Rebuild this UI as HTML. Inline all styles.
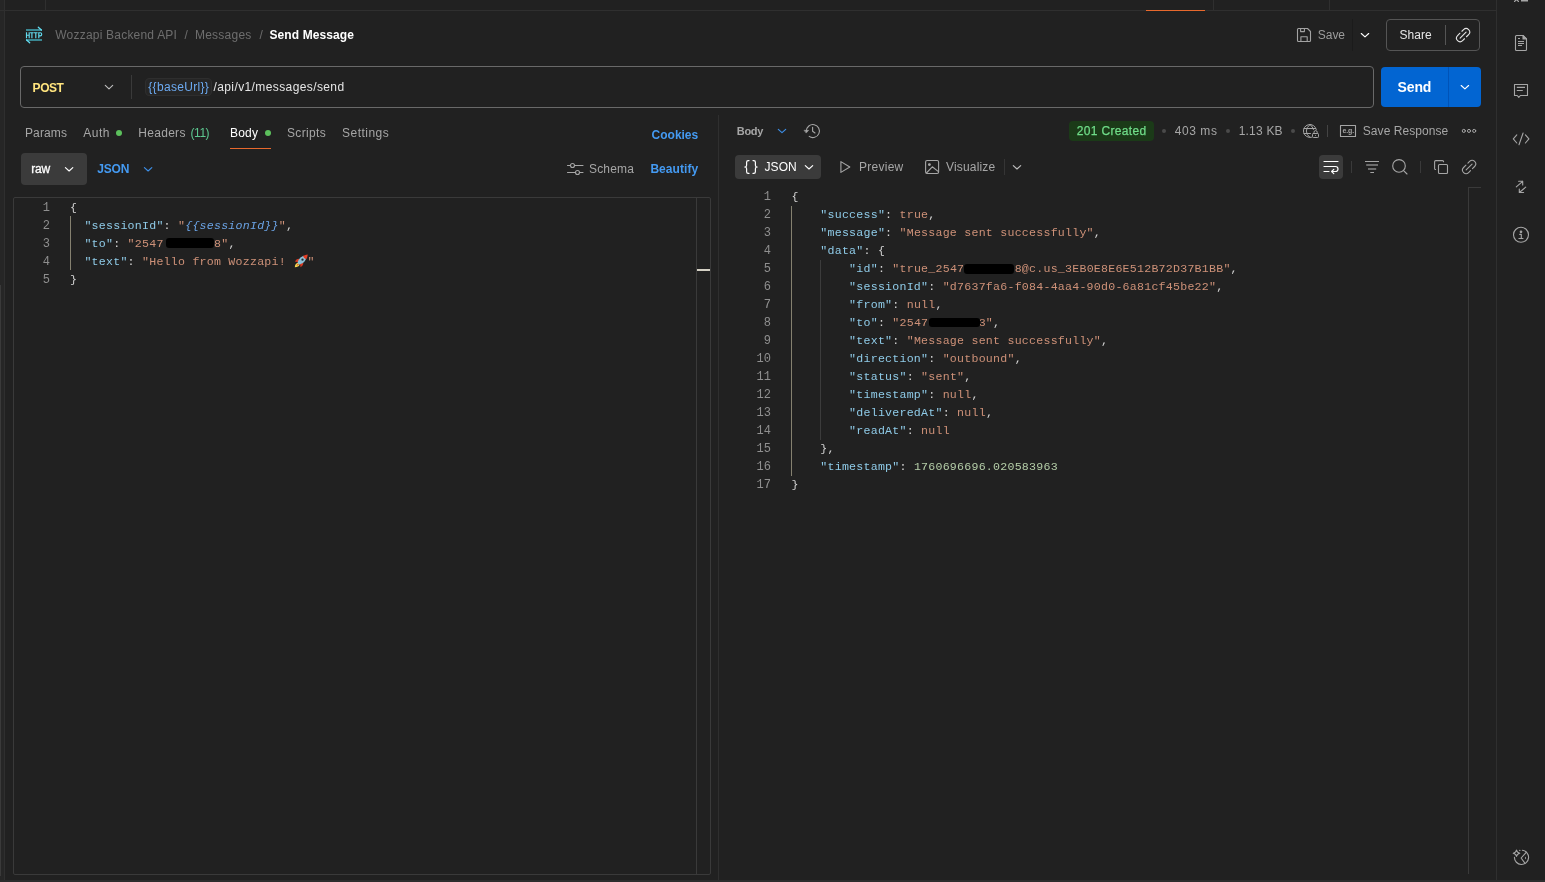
<!DOCTYPE html>
<html>
<head>
<meta charset="utf-8">
<title>Postman</title>
<style>
*{box-sizing:border-box;margin:0;padding:0}
html,body{width:1545px;height:882px;overflow:hidden;background:#212121}
body{position:relative;font-family:"Liberation Sans",sans-serif;font-size:12px;color:#a6a6a6}
.a{position:absolute}
.t{position:absolute;white-space:nowrap;line-height:16px;height:16px}
.ln{position:absolute;background:#2f2f2f}
.code{position:absolute;font-family:"Liberation Mono",monospace;font-size:11.6px;letter-spacing:0.24px;line-height:18px;white-space:pre;color:#d4d4d4}
.k{color:#8fcbe8}.s{color:#ce9178}.p{color:#d4d4d4}.n{color:#b5cea8}.v{color:#6ba4e6;font-style:italic}
.num{position:absolute;text-align:right;color:#8f8f8f;font-family:"Liberation Mono",monospace;font-size:12px;line-height:18px;white-space:pre}
svg{position:absolute;overflow:visible}
.blue{color:#449af2}
.b{font-weight:bold}
.w{color:#fff}
.i{fill:none;stroke:#a6a6a6;stroke-width:1.1;stroke-linecap:round;stroke-linejoin:round}
</style>
</head>
<body>
<div id="root" style="position:absolute;left:0;top:0;width:1545px;height:882px;will-change:transform;transform:translateZ(0)">

<!-- frame lines -->
<div class="a" style="left:0;top:0;width:4px;height:880px;background:#262626"></div>
<div class="a" style="left:0;top:285px;width:1px;height:591px;background:#3a3a3a"></div>
<div class="ln" style="left:4px;top:0;width:1px;height:880px"></div>
<div class="ln" style="left:0;top:10px;width:1497px;height:1px"></div>
<div class="ln" style="left:45px;top:0;width:1px;height:10px"></div>
<div class="ln" style="left:1213px;top:0;width:1px;height:10px"></div>
<div class="ln" style="left:1329px;top:0;width:1px;height:10px"></div>
<div class="a" style="left:1146px;top:10px;width:59px;height:1px;background:#e8692d"></div>
<div class="ln" style="left:1496px;top:0;width:1px;height:880px"></div>
<div class="ln" style="left:718px;top:115px;width:1px;height:765px"></div>
<div class="a" style="left:0;top:880px;width:1545px;height:2px;background:#2d2d2d"></div>

<!-- breadcrumb -->
<div id="bc1" style="left:55.3px;letter-spacing:0.208px;top:27px;color:#6e6e6e" class="t">Wozzapi Backend API</div>
<div class="t" style="left:184.6px;top:27px;color:#6e6e6e">/</div>
<div id="bc2" style="left:194.9px;letter-spacing:0.253px;top:27px;color:#6e6e6e" class="t">Messages</div>
<div class="t" style="left:259.5px;top:27px;color:#6e6e6e">/</div>
<div id="bc3" style="left:269.5px;letter-spacing:0.098px;top:27px;color:#fff" class="t b">Send Message</div>

<!-- save / share -->
<div id="save" style="left:1317.8px;letter-spacing:-0.046px;top:27px;color:#9c9c9c" class="t">Save</div>
<div class="a" style="left:1352px;top:19px;width:1px;height:32px;background:#1b1b1b"></div>
<div class="a" style="left:1386px;top:19px;width:94px;height:32px;border:1px solid #555;border-radius:4px"></div>
<div id="share" style="left:1399.6px;letter-spacing:-0.007px;top:27px;color:#e6e6e6" class="t">Share</div>
<div class="a" style="left:1445px;top:25px;width:1px;height:20px;background:#555"></div>

<!-- url bar -->
<div class="a" style="left:20px;top:66px;width:1354px;height:42px;border:1px solid #696969;border-radius:4px"></div>
<div id="post" style="left:32.6px;letter-spacing:-0.449px;top:80px;color:#ffe47e" class="t b">POST</div>
<div class="a" style="left:131px;top:75px;width:1px;height:24px;background:#3a3a3a"></div>
<div class="a" style="left:145px;top:78px;width:67px;height:18px;border:1px solid #2e2e2e;border-radius:4px;background:#262626"></div>
<div id="burl" style="left:148.3px;letter-spacing:0.306px;top:79px;color:#6caaf2" class="t">{{baseUrl}}</div>
<div id="path" style="left:213.5px;letter-spacing:0.393px;top:79px;color:#e6e6e6" class="t">/api/v1/messages/send</div>

<!-- send -->
<div class="a" style="left:1381px;top:67px;width:100px;height:40px;background:#0265d2;border-radius:4px"></div>
<div class="a" style="left:1448px;top:67px;width:1px;height:40px;background:#0053b8"></div>
<div id="send" style="left:1397.6px;letter-spacing:-0.153px;top:78px;color:#fff;font-size:14px;line-height:18px;height:18px" class="t b">Send</div>

<!-- request tabs -->
<div id="tparams" style="left:25.0px;letter-spacing:0.119px;top:125px" class="t">Params</div>
<div id="tauth" style="left:83.3px;letter-spacing:0.489px;top:125px" class="t">Auth</div>
<div class="a" style="left:116px;top:130px;width:6px;height:6px;border-radius:3px;background:#5cc05c"></div>
<div id="thead" style="left:138.2px;letter-spacing:0.314px;top:125px" class="t">Headers</div>
<div id="t11" style="left:190.5px;letter-spacing:-0.444px;top:125px;color:#5dc890" class="t">(11)</div>
<div id="tbody" style="left:230.0px;letter-spacing:0.183px;top:125px;color:#fff" class="t">Body</div>
<div class="a" style="left:265px;top:130px;width:6px;height:6px;border-radius:3px;background:#5cc05c"></div>
<div class="a" style="left:230px;top:148px;width:41px;height:1px;background:#e8692d"></div>
<div id="tscripts" style="left:287.0px;letter-spacing:0.356px;top:125px" class="t">Scripts</div>
<div id="tsettings" style="left:342.0px;letter-spacing:0.485px;top:125px" class="t">Settings</div>
<div id="cookies" style="left:651.6px;letter-spacing:-0.013px;top:127px" class="t b blue">Cookies</div>

<!-- body type row -->
<div class="a" style="left:21px;top:153px;width:66px;height:32px;background:#3b3b3b;border-radius:4px"></div>
<div id="raw" style="left:31.2px;letter-spacing:-0.177px;top:161px;color:#fff;-webkit-text-stroke:0.3px #fff" class="t">raw</div>
<div id="json1" style="left:97.3px;letter-spacing:-0.225px;top:161px" class="t b blue">JSON</div>
<div id="schema" style="left:589.0px;letter-spacing:0.158px;top:161px" class="t">Schema</div>
<div id="beautify" style="left:650.4px;letter-spacing:0.061px;top:161px" class="t b blue">Beautify</div>

<!-- request editor -->
<div class="a" style="left:13px;top:197px;width:698px;height:678px;border:1px solid #3a3a3a;border-radius:2px"></div>
<div class="a" style="left:696px;top:198px;width:1px;height:676px;background:#3a3a3a"></div>
<div class="a" style="left:697px;top:269px;width:13px;height:2px;background:#d4d0c4"></div>
<div class="num" style="left:20px;top:199px;width:30px">1
2
3
4
5</div>
<div class="a" style="left:70px;top:216px;width:1px;height:54px;background:#858170"></div>
<div class="code" style="left:70px;top:199px"><span class="p">{</span>
  <span class="k">"sessionId"</span>: <span class="s">"</span><span class="v">{{sessionId}}</span><span class="s">"</span>,
  <span class="k">"to"</span>: <span class="s">"2547       8"</span>,
  <span class="k">"text"</span>: <span class="s">"Hello from Wozzapi!   "</span>
<span class="p">}</span></div>
<div class="a" style="left:166px;top:238px;width:48px;height:10px;background:#000;border-radius:3px"></div>

<!-- response header -->
<div id="rbody" style="left:736.8px;letter-spacing:-0.314px;top:123px;font-size:11px" class="t b">Body</div>
<div class="a" style="left:1069px;top:121px;width:85px;height:20px;background:#1b3a18;border-radius:4px"></div>
<div id="created" style="left:1076.7px;letter-spacing:0.338px;top:123px;color:#6fdc88;-webkit-text-stroke:0.25px #6fdc88" class="t">201 Created</div>
<div class="a" style="left:1162px;top:129px;width:4px;height:4px;border-radius:2px;background:#4a4a4a"></div>
<div id="ms" style="left:1174.7px;letter-spacing:0.571px;top:123px" class="t">403 ms</div>
<div class="a" style="left:1226px;top:129px;width:4px;height:4px;border-radius:2px;background:#4a4a4a"></div>
<div id="kb" style="left:1238.7px;letter-spacing:0.200px;top:123px" class="t">1.13 KB</div>
<div class="a" style="left:1291px;top:129px;width:4px;height:4px;border-radius:2px;background:#4a4a4a"></div>
<div class="a" style="left:1327px;top:125px;width:1px;height:12px;background:#444"></div>
<div id="saveresp" style="left:1362.8px;letter-spacing:0.053px;top:123px" class="t">Save Response</div>

<!-- response toolbar -->
<div class="a" style="left:735px;top:155px;width:86px;height:24px;background:#3b3b3b;border-radius:4px"></div>
<div id="json2" style="left:764.6px;letter-spacing:0.024px;top:159px;color:#fff" class="t">JSON</div>
<div id="preview" style="left:859.0px;letter-spacing:0.263px;top:159px" class="t">Preview</div>
<div id="visualize" style="left:946.0px;letter-spacing:0.175px;top:159px" class="t">Visualize</div>
<div class="a" style="left:1004px;top:159px;width:1px;height:16px;background:#353535"></div>
<div class="a" style="left:1319px;top:155px;width:24px;height:24px;background:#3b3b3b;border-radius:4px"></div>
<div class="a" style="left:1351px;top:161px;width:1px;height:12px;background:#3a3a3a"></div>
<div class="a" style="left:1420px;top:161px;width:1px;height:12px;background:#3a3a3a"></div>

<!-- response editor -->
<div class="a" style="left:1468px;top:187px;width:13px;height:1px;background:#3a3a3a"></div>
<div class="a" style="left:1468px;top:187px;width:1px;height:687px;background:#3a3a3a"></div>
<div class="num" style="left:740px;top:188px;width:31px">1
2
3
4
5
6
7
8
9
10
11
12
13
14
15
16
17</div>
<div class="a" style="left:791px;top:206px;width:1px;height:270px;background:#858170"></div>
<div class="a" style="left:820px;top:260px;width:1px;height:180px;background:#3c3c3c"></div>
<div class="code" style="left:791.5px;top:188px"><span class="p">{</span>
    <span class="k">"success"</span>: <span class="s">true</span>,
    <span class="k">"message"</span>: <span class="s">"Message sent successfully"</span>,
    <span class="k">"data"</span>: {
        <span class="k">"id"</span>: <span class="s">"true_2547       8@c.us_3EB0E8E6E512B72D37B1BB"</span>,
        <span class="k">"sessionId"</span>: <span class="s">"d7637fa6-f084-4aa4-90d0-6a81cf45be22"</span>,
        <span class="k">"from"</span>: <span class="s">null</span>,
        <span class="k">"to"</span>: <span class="s">"2547       3"</span>,
        <span class="k">"text"</span>: <span class="s">"Message sent successfully"</span>,
        <span class="k">"direction"</span>: <span class="s">"outbound"</span>,
        <span class="k">"status"</span>: <span class="s">"sent"</span>,
        <span class="k">"timestamp"</span>: <span class="s">null</span>,
        <span class="k">"deliveredAt"</span>: <span class="s">null</span>,
        <span class="k">"readAt"</span>: <span class="s">null</span>
    },
    <span class="k">"timestamp"</span>: <span class="n">1760696696.020583963</span>
<span class="p">}</span></div>
<div class="a" style="left:964px;top:264px;width:50px;height:9.5px;background:#000;border-radius:3px"></div>
<div class="a" style="left:929px;top:318px;width:51px;height:9px;background:#000;border-radius:3px"></div>

<!-- icons overlay -->
<svg style="left:0;top:0" width="1545" height="882" viewBox="0 0 1545 882">
<defs>
<path id="chev" d="M-3.7 -1.7 L0 1.7 L3.7 -1.7" fill="none" stroke-width="1.15" stroke-linecap="round" stroke-linejoin="round"/>
<g id="link" fill="none" stroke-width="1.1" stroke-linecap="round">
<g transform="rotate(-45)"><path d="M1.9 -3.55 H4.25 A3.55 3.55 0 0 1 4.25 3.55 H1.2 M-1.6 3.55 H-4.25 A3.55 3.55 0 0 1 -4.25 -3.55 H-0.9 M-4.2 0 H4.2"/></g></g>
</defs>
<!-- request-type icon -->
<g>
<rect x="26" y="29" width="16" height="2" fill="#3a8792"/>
<rect x="26" y="39" width="16" height="2" fill="#3a8792"/>
<path d="M38.3 27.3 L41.4 30.1" stroke="#62dcf0" stroke-width="1.3" fill="none" stroke-linecap="round"/>
<path d="M26.6 39.9 L29.7 42.7" stroke="#62dcf0" stroke-width="1.3" fill="none" stroke-linecap="round"/>
<path d="M26.5 32.2 V38.3 M29.2 32.2 V38.3 M26.5 35.2 H29.2 M30.1 32.7 H33.7 M31.9 32.7 V38.3 M34 32.7 H37.6 M35.8 32.7 V38.3 M38.8 38.3 V32.7 H40.3 Q41.7 32.7 41.7 34.3 Q41.7 35.9 40.3 35.9 H38.8" stroke="#62dcf0" stroke-width="1.15" fill="none"/>
</g>
<!-- save icon -->
<g class="i" style="stroke:#a3a3a3">
<path d="M1297.5 29.5 Q1297.5 28.5 1298.5 28.5 H1307.5 L1310.5 31.5 V40.5 Q1310.5 41.5 1309.5 41.5 H1298.5 Q1297.5 41.5 1297.5 40.5 Z"/>
<path d="M1300.6 28.5 V31.6 H1304.4 V28.5"/>
<path d="M1300.9 41.5 V36.7 H1307.2 V41.5"/>
</g>
<use href="#chev" x="1365" y="35.2" stroke="#fff"/>
<use href="#link" x="1463.1" y="35.1" stroke="#e6e6e6"/>
<use href="#chev" x="109" y="87.1" stroke="#bdbdbd"/>
<use href="#chev" x="1464.9" y="87.2" stroke="#fff"/>
<use href="#chev" x="69.1" y="169.3" stroke="#fff"/>
<use href="#chev" x="148.1" y="169.3" stroke="#3d8fe8"/>
<!-- schema sliders -->
<g class="i">
<path d="M567.5 165.5 H570.3 M574.7 165.5 H583 M567.5 172.5 H575.3 M579.7 172.5 H583"/>
<circle cx="572.5" cy="165.5" r="2"/><circle cx="577.5" cy="172.5" r="2"/>
</g>
<!-- response header -->
<use href="#chev" x="782" y="131" stroke="#3d8fe8"/>
<g class="i">
<path d="M806.4 131 A6.5 6.5 0 1 1 809.2 136.4"/>
<path d="M804.4 130.3 L808.6 130.3 L806.4 132.8 Z" fill="#a6a6a6" stroke-width=".6"/>
<path d="M812.6 127.3 V131.2 L815 133"/>
</g>
<!-- globe + lock -->
<g class="i" style="stroke-width:1">
<path d="M1311.5 137.3 A6.5 6.5 0 1 1 1316.3 129.5"/>
<path d="M1310 124.5 Q1306.3 127.5 1306.3 131 Q1306.3 134.5 1310 137.5 M1310 124.5 Q1313 127 1313.5 129.5"/>
<path d="M1304 128.5 H1315.5 M1304 133.5 H1310.5"/>
<rect x="1312.5" y="133.5" width="6" height="4" rx=".8"/>
<path d="M1314 133.5 V132.2 A1.6 1.6 0 0 1 1317.2 132.2 V133.5"/><circle cx="1315.5" cy="135.6" r=".5" fill="#a6a6a6" stroke="none"/>
</g>
<!-- e.g. icon -->
<rect x="1340.5" y="125.5" width="15" height="11" class="i"/>
<text x="1342.4" y="133" font-family="Liberation Sans, sans-serif" font-size="7" font-weight="bold" fill="#a6a6a6" letter-spacing="-0.1">e.g.</text>
<!-- ooo -->
<g class="i" style="stroke-width:1"><circle cx="1463.8" cy="130.9" r="1.55"/><circle cx="1469" cy="130.9" r="1.55"/><circle cx="1474.2" cy="130.9" r="1.55"/></g>
<!-- json braces -->
<g class="i" style="stroke:#fff;stroke-width:1.2">
<path d="M749 160.6 H748.2 Q746.6 160.6 746.6 162.2 V165.2 Q746.6 167 744.8 167 Q746.6 167 746.6 168.8 V171.8 Q746.6 173.4 748.2 173.4 H749"/>
<path d="M753 160.6 H753.8 Q755.4 160.6 755.4 162.2 V165.2 Q755.4 167 757.2 167 Q755.4 167 755.4 168.8 V171.8 Q755.4 173.4 753.8 173.4 H753"/>
</g>
<use href="#chev" x="809" y="167.3" stroke="#fff"/>
<!-- preview play -->
<path class="i" d="M840.9 161.6 L849.8 167 L840.9 172.4 Z"/>
<!-- visualize image -->
<g class="i"><rect x="925.6" y="160.5" width="13" height="13" rx="1.5"/><circle cx="929.4" cy="164.6" r=".9" fill="#a6a6a6"/><path d="M926.4 173 L932.3 166.8 L938.4 171.6"/></g>
<use href="#chev" x="1017" y="167.3" stroke="#bdbdbd"/>
<!-- wrap -->
<g class="i" style="stroke:#fff;stroke-width:1.2"><path d="M1324 161.5 H1338 M1324 166.5 H1335.5 A2.5 2.5 0 0 1 1335.5 171.5 H1331.6 M1333.8 169.3 L1331.6 171.5 L1333.8 173.7 M1324 171.5 H1329"/></g>
<!-- filter -->
<g fill="none" stroke-linecap="butt"><path d="M1365 161.5 H1379" stroke="#a6a6a6" stroke-width="1"/><path d="M1366.2 165 H1378" stroke="#808080" stroke-width="1.6"/><path d="M1368 169 H1376.2" stroke="#808080" stroke-width="1.6"/><path d="M1370.3 172.5 H1374" stroke="#a6a6a6" stroke-width="1"/></g>
<!-- search -->
<g class="i"><circle cx="1399" cy="165.9" r="6.3"/><path d="M1403.6 170.6 L1407 174"/></g>
<!-- copy -->
<g class="i"><rect x="1438.5" y="164.5" width="9" height="9" rx="1"/><path d="M1435.6 169.5 Q1434.6 169.5 1434.6 168.4 V161.7 Q1434.6 160.6 1435.7 160.6 H1442.5 Q1443.6 160.6 1443.6 161.7"/></g>
<use href="#link" x="1469.1" y="167" stroke="#a6a6a6"/>
<!-- rocket -->
<g transform="translate(294 254)">
<path d="M0.8 13.2 Q1 9.6 4 8.8 L5.6 10.4 Q4.8 13 0.8 13.2 Z" fill="#f4dc50"/>
<path d="M2.4 11.8 Q2.8 10 4.4 9.4 L5 10.2 Q4.4 11.4 2.4 11.8 Z" fill="#e2502c"/>
<path d="M1 7.8 Q2 4.6 5.4 4.8 L4.2 8.4 Q2.6 7.4 1 7.8 Z" fill="#d83a22"/>
<path d="M6.4 13.2 Q9.6 12 9.2 8.6 L5.8 10 Q6.8 11.6 6.4 13.2 Z" fill="#d83a22"/>
<path d="M3.7 9.2 Q3.9 4.2 9.4 1.7 L12.3 4.6 Q9.9 10.2 4.9 10.4 Z" fill="#8fc1d8"/>
<path d="M8.9 2 Q11.4 0.5 13.7 0.4 Q13.7 2.8 12.1 5.2 Q10 4.6 8.9 2 Z" fill="#e43e24"/>
<circle cx="8.5" cy="5.7" r="1.15" fill="#222c34"/>
</g>
<!-- right sidebar -->
<g class="i">
<rect x="1521" y="0" width="7" height="1.5" fill="#a6a6a6" stroke="none"/>
<path d="M1514.5 1.5 L1516 0 M1518.5 1.5 L1517 0" />
<path d="M1515.5 36.5 Q1515.5 35.5 1516.5 35.5 H1523 L1526.5 39 V49.5 Q1526.5 50.5 1525.5 50.5 H1516.5 Q1515.5 50.5 1515.5 49.5 Z"/>
<path d="M1523 35.5 V39 H1526.5 Z" fill="#a6a6a6"/>
<path d="M1518 38.5 H1520 M1518 41.5 H1524 M1518 43.5 H1524 M1518 45.5 H1522" stroke-linecap="butt"/>
<path d="M1514.5 84.5 H1527.5 V95.5 H1520.4 L1518.8 97.3 L1517.2 95.5 H1514.5 Z"/>
<path d="M1516.8 87.4 H1525 M1516.8 90.5 H1522.8" stroke-linecap="butt"/>
<path d="M1516.8 134.8 L1513.3 138.9 L1516.8 143 M1523.1 133 L1519 144.8 M1525.4 134.8 L1528.9 138.9 L1525.4 143"/>
<path d="M1516.3 186.8 L1522.7 181.3 M1518.6 181.3 H1522.7 V185 M1525.7 187.2 L1519.3 192.5 M1519.3 189 V192.5 H1523.6"/>
<circle cx="1521" cy="234.8" r="7.5"/>
<circle cx="1521" cy="231.8" r=".8" fill="#a6a6a6"/>
<path d="M1519.7 234.4 H1521.3 V238.5 M1518.9 238.5 H1523"/>
<!-- postbot -->
<path d="M1522.3 850.3 A7.1 7.1 0 1 1 1514.4 857.3"/>
<path d="M1526.4 852.2 L1521.1 858 L1524.9 863.1"/>
<ellipse cx="1525.6" cy="858" rx=".45" ry="1.3" fill="#a6a6a6" stroke="none"/>
<path d="M1516.5 850 Q1517 852.7 1519.8 853.2 Q1517 853.7 1516.5 856.4 Q1516 853.7 1513.2 853.2 Q1516 852.7 1516.5 850 Z"/>
<circle cx="1519.8" cy="850.4" r=".7" fill="#a6a6a6" stroke="none"/>
</g>
</svg>

</div>
</body>
</html>
